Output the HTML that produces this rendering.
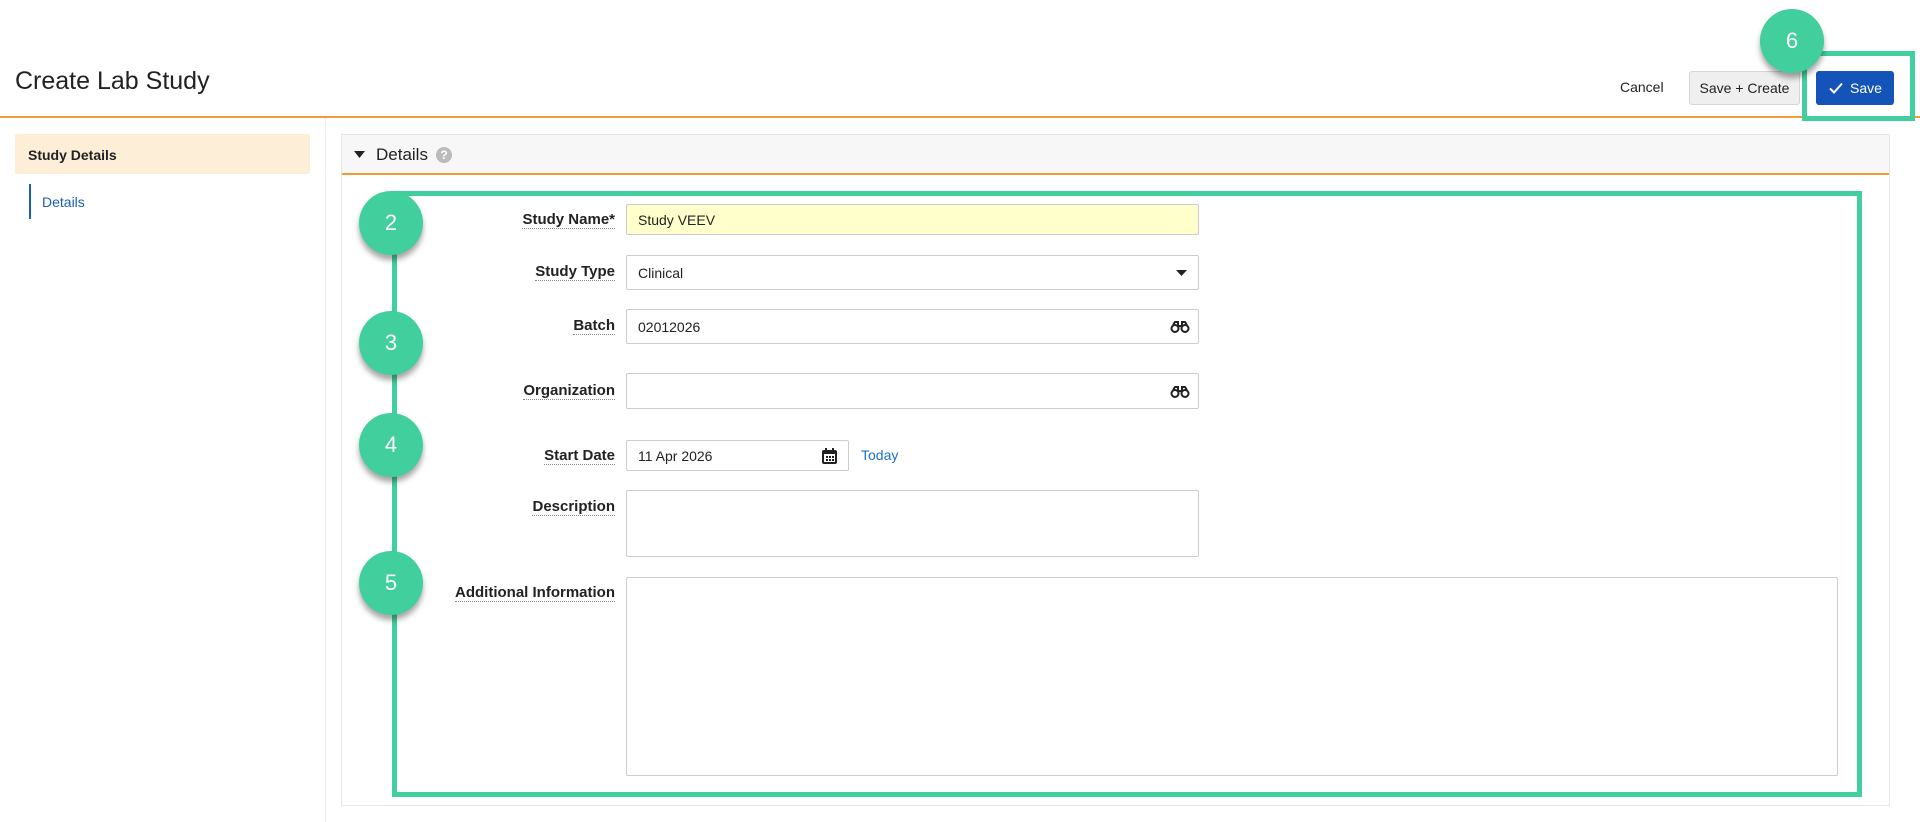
<!DOCTYPE html>
<html><head><meta charset="utf-8"><style>
*{box-sizing:border-box;margin:0;padding:0}
body{width:1920px;height:822px;background:#fff;font-family:"Liberation Sans",Arial,sans-serif;color:#222;position:relative;overflow:hidden}
.a{position:absolute}
.lbl{position:absolute;right:1305px;font-weight:bold;font-size:15px;color:#222;border-bottom:1px dotted #888;line-height:17px;text-align:right}
.inp{position:absolute;left:626px;border:1px solid #ccc;border-radius:2px;background:#fff;font-size:14px;padding-left:11px;display:flex;align-items:center}
.circ{position:absolute;width:64px;height:64px;border-radius:50%;background:#41cf9d;color:#fff;font-size:22px;display:flex;align-items:center;justify-content:center;box-shadow:0 5px 6px rgba(0,0,0,.35)}
</style></head><body>
<div class="a" style="left:15px;top:67px;font-size:25px;color:#222">Create Lab Study</div>
<div class="a" style="left:1620px;top:79px;font-size:14px">Cancel</div>
<div class="a" style="left:1689px;top:71px;width:111px;height:34px;border:1px solid #d6d6d6;border-radius:3px;background:#efefef;font-size:14px;display:flex;align-items:center;justify-content:center">Save + Create</div>
<div class="a" style="left:1816px;top:71px;width:78px;height:34px;border-radius:3px;background:#1453b8;color:#fff;font-size:14px;display:flex;align-items:center;justify-content:center"><svg width="16" height="14" viewBox="0 0 16 14" style="margin-right:6px"><path d="M2 7.5l4 4 8-9" stroke="#fff" stroke-width="2" fill="none"/></svg>Save</div>
<div class="a" style="left:0;top:116px;width:1920px;height:2px;background:#f39a34"></div>
<div class="a" style="left:1802px;top:51px;width:113px;height:70px;border:5px solid #41cf9d"></div>
<div class="circ" style="left:1760px;top:9px">6</div>
<div class="a" style="left:325px;top:118px;width:1px;height:704px;background:#eee"></div>
<div class="a" style="left:15px;top:134px;width:295px;height:40px;background:#fdefd7;border-radius:2px;font-weight:bold;font-size:14px;padding:13px 0 0 13px">Study Details</div>
<div class="a" style="left:29px;top:184px;width:2px;height:35px;background:#1a5eb8"></div>
<div class="a" style="left:42px;top:194px;font-size:14px;color:#1a5eb8">Details</div>
<div class="a" style="left:341px;top:134px;width:1549px;height:672px;border:1px solid #e6e6e6"></div>
<div class="a" style="left:342px;top:135px;width:1547px;height:40px;background:#f7f7f7;border-bottom:2px solid #f39a34"></div>
<svg class="a" style="left:354px;top:151px" width="11" height="8"><path d="M0 0h11L5.5 7z" fill="#222"/></svg>
<div class="a" style="left:376px;top:145px;font-size:17px;color:#222">Details</div>
<div class="a" style="left:436px;top:147px;width:16px;height:16px;border-radius:50%;background:#bbb;color:#fff;font-size:12px;font-weight:bold;text-align:center;line-height:16px">?</div>
<div class="a" style="left:392px;top:191px;width:1470px;height:606px;border:5px solid #41cf9d"></div>
<div class="circ" style="left:359px;top:191px">2</div>
<div class="circ" style="left:359px;top:311px">3</div>
<div class="circ" style="left:359px;top:413px">4</div>
<div class="circ" style="left:359px;top:551px">5</div>
<div class="lbl" style="top:211px">Study Name*</div>
<div class="inp" style="top:204px;width:573px;height:31px;background:#ffffcc">Study VEEV</div>
<div class="lbl" style="top:263px">Study Type</div>
<div class="inp" style="top:255px;width:573px;height:35px">Clinical<svg class="a" style="right:11px;top:14px" width="11" height="7"><path d="M0 0h11L5.5 6z" fill="#222"/></svg></div>
<div class="lbl" style="top:317px">Batch</div>
<div class="inp" style="top:309px;width:573px;height:35px">02012026<svg class="a" style="right:8px;top:11px" width="20" height="12" viewBox="0 0 20 12"><circle cx="5" cy="7.5" r="3.5" fill="none" stroke="#222" stroke-width="2"/><circle cx="15" cy="7.5" r="3.5" fill="none" stroke="#222" stroke-width="2"/><path d="M3 4L5 1h3v3M17 4l-2-3h-3v3M8 5h4" stroke="#222" stroke-width="2" fill="none"/></svg></div>
<div class="lbl" style="top:382px">Organization</div>
<div class="inp" style="top:373px;width:573px;height:36px"><svg class="a" style="right:8px;top:12px" width="20" height="12" viewBox="0 0 20 12"><circle cx="5" cy="7.5" r="3.5" fill="none" stroke="#222" stroke-width="2"/><circle cx="15" cy="7.5" r="3.5" fill="none" stroke="#222" stroke-width="2"/><path d="M3 4L5 1h3v3M17 4l-2-3h-3v3M8 5h4" stroke="#222" stroke-width="2" fill="none"/></svg></div>
<div class="lbl" style="top:447px">Start Date</div>
<div class="inp" style="top:440px;width:223px;height:31px">11 Apr 2026<svg class="a" style="right:11px;top:7px" width="15" height="16" viewBox="0 0 15 16"><rect x="1" y="3" width="13" height="12" rx="1" fill="none" stroke="#222" stroke-width="2"/><rect x="1" y="3" width="13" height="3" fill="#222"/><path d="M4 0v4M11 0v4" stroke="#222" stroke-width="2"/><path d="M4 8h2v2H4zM7 8h2v2H7zM10 8h2v2h-2zM4 11h2v2H4zM7 11h2v2H7zM10 11h2v2h-2z" fill="#222"/></svg></div>
<div class="a" style="left:861px;top:447px;font-size:14px;color:#1a6fd0">Today</div>
<div class="lbl" style="top:498px">Description</div>
<div class="inp" style="top:490px;width:573px;height:67px"></div>
<div class="lbl" style="top:584px">Additional Information</div>
<div class="inp" style="top:577px;width:1212px;height:199px"></div>
</body></html>
